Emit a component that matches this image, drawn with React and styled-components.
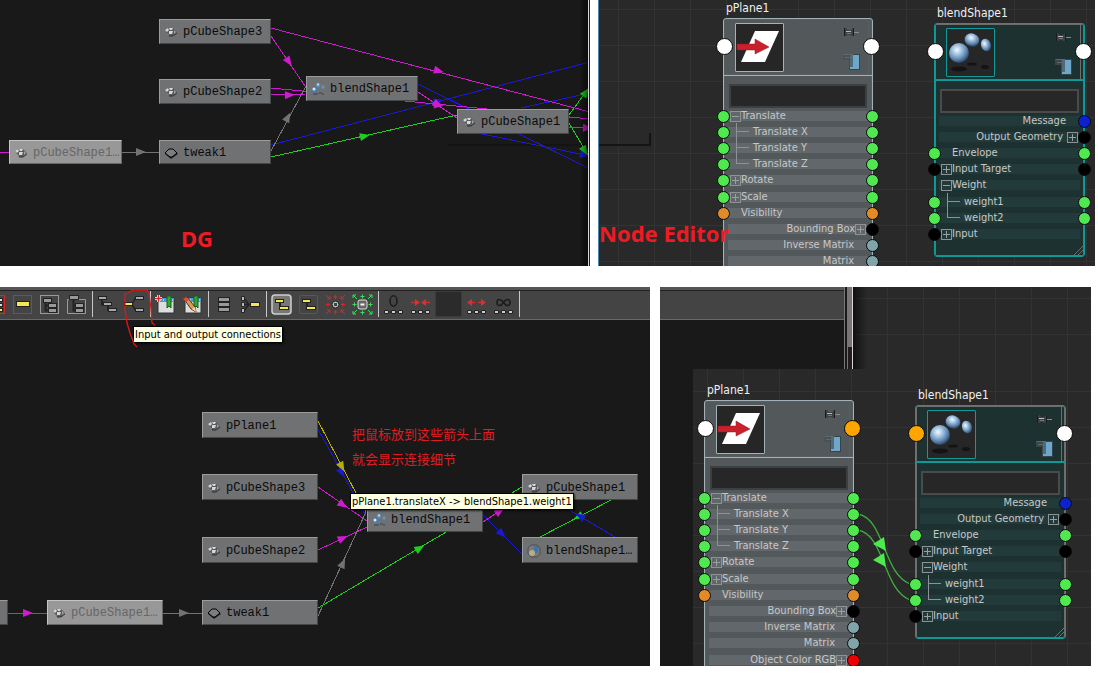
import React from "react";
import styled, { createGlobalStyle, css } from "styled-components";

const GlobalStyle = createGlobalStyle`
  *, *::before, *::after { box-sizing: border-box; }
  body { margin: 0; background: #fff; }
  button, input { font: inherit; color: inherit; margin: 0; padding: 0; }
`;

const UI_FONT = `"DejaVu Sans Condensed", "Noto Sans", sans-serif`;

/* ---------- page ---------- */

const Page = styled.main`
  display: flex;
  flex-direction: column;
  gap: 21px;
  font-family: ${UI_FONT};
  overflow: hidden;
`;

const TopRow = styled.section`
  display: grid;
  grid-template-columns: 590fr 497fr;
  gap: 8px;
  padding-right: 3px;
  height: 266px;
`;

const BottomRow = styled.section`
  display: grid;
  grid-template-columns: 650fr 431fr;
  gap: 10px;
  padding-right: 7px;
  height: 379px;
`;

const gridLines = css`
  background-color: #292929;
  background-image: linear-gradient(90deg, #333 1px, transparent 1px),
    linear-gradient(#333 1px, transparent 1px);
  background-size: 36px 36px;
`;

const GraphCanvas = styled.div`
  position: relative;
  flex: 1;
  min-width: 0;
  overflow: hidden;
  background: #191919;
`;

const DgPanel = styled.div`
  display: flex;
  min-width: 0;
`;

const WindowEdge = styled.div`
  position: relative;
  width: 2px;
  background: linear-gradient(90deg, #d8d8d8 1px, #222 1px);
  &::before {
    content: "";
    position: absolute;
    top: 0;
    right: 2px;
    width: 9px;
    height: 100%;
    background: linear-gradient(90deg, transparent, #0008);
  }
`;

const EditorCanvas = styled.div`
  position: relative;
  flex: 1;
  min-width: 0;
  overflow: hidden;
  ${gridLines}
  background-position: ${(p) => p.$origin};
  border-left: ${(p) => (p.$framed ? "1px solid #4f86b0" : "none")};
`;

const DropShadow = styled.div`
  position: absolute;
  left: ${(p) => p.$x}px;
  top: 133px;
  width: ${(p) => p.$w}px;
  height: 13px;
  border-bottom: 2px solid #141414;
  border-right: ${(p) => (p.$corner ? "2px solid #141414" : "none")};
`;

const Layer = styled.svg`
  position: absolute;
  left: 0;
  top: 0;
  width: 100%;
  height: 100%;
  overflow: visible;
  pointer-events: none;
`;

const Caption = styled.strong`
  position: absolute;
  left: ${(p) => p.$x}px;
  top: ${(p) => p.$y}px;
  font: 700 22px/30px "Noto Sans", sans-serif;
  color: #ed1c24;
  white-space: nowrap;
`;

const Note = styled.p`
  position: absolute;
  left: 352px;
  top: 101px;
  margin: 0;
  font: 13px/25px "Noto Sans CJK SC", sans-serif;
  color: #e01c22;
  white-space: nowrap;
`;

const Tooltip = styled.div`
  position: absolute;
  left: ${(p) => p.$x}px;
  top: ${(p) => p.$y}px;
  height: 17px;
  padding: 0 1px;
  border: 1px solid #000;
  background: #ffffe1;
  color: #000;
  font-size: 11px;
  line-height: 15px;
  white-space: nowrap;
  box-shadow: 1px 1px 2px #000a;
`;

/* ---------- dependency graph ---------- */

const NodeBox = styled.div`
  position: absolute;
  left: ${(p) => p.$x}px;
  top: ${(p) => p.$y}px;
  width: ${(p) => p.$w}px;
  height: ${(p) => p.$h}px;
  display: flex;
  align-items: center;
  gap: 4px;
  padding: 1px 0 0 4px;
  overflow: hidden;
  border: 1px solid;
  border-color: ${(p) => (p.$pale ? "#c4c4c4 #666 #666 #c4c4c4" : "#9a9c9d #43474a #43474a #9a9c9d")};
  background: ${(p) => (p.$pale ? "#989898" : "#6f7173")};
  color: ${(p) => (p.$pale ? "#666" : "#0a0a0a")};
  font: 12px/16px "Liberation Mono", monospace;
  white-space: nowrap;
  svg { flex: none; }
`;

const MeshIcon = () => (
  <svg width="15" height="14" viewBox="0 0 15 14">
    <path d="M1 5 4 3 9 3 13 7 9 11 5 11Z" fill="#5a5a5a" />
    <path d="M1 5 4 3 5 5 3 7ZM5 3 9 3 8 5 6 5ZM5 6 9 6 8 9 5 9Z" fill="#d6d6d6" />
    <path d="M10 5 12 7 10 9ZM3 8 5 10 4 10Z" fill="#a2a2a2" />
    <path d="M5 11 9 11 13 8" stroke="#333" fill="none" />
  </svg>
);

const TweakIcon = () => (
  <svg width="15" height="14" viewBox="0 0 15 14">
    <path d="M1 8 7 13 14 8 13 7Z" fill="#222" />
    <path d="M1 7 5 3 9 3 13 7 8 11 6 11Z" fill="#7b7d7e" stroke="#000" />
  </svg>
);

const BlendIcon = () => (
  <svg width="15" height="14" viewBox="0 0 15 14">
    <circle cx="4" cy="8" r="3" fill="#4d7ba6" />
    <circle cx="3" cy="7" r="1.5" fill="#d4e8f8" />
    <circle cx="7" cy="3" r="2.4" fill="#5f8db6" />
    <circle cx="7" cy="2.5" r="1" fill="#d4e8f8" />
    <circle cx="12" cy="5" r="1.7" fill="#6892b8" />
    <path d="M2 12h5M8 11h3M11 12h2" stroke="#3f4346" />
  </svg>
);

const BlendSetIcon = () => (
  <svg width="15" height="14" viewBox="0 0 15 14">
    <path d="M4 1 10 1 13 4 13 10 10 13 4 13 1 10 1 4Z" fill="#77797a" stroke="#4c4e50" />
    <rect x="7" y="2" width="4" height="7" rx="1" fill="#3f74aa" />
    <circle cx="5" cy="9" r="3" fill="#b9ad86" />
  </svg>
);

const ICONS = { mesh: MeshIcon, tweak: TweakIcon, blend: BlendIcon, set: BlendSetIcon };

function GraphNode({ x, y, w, h = 25, icon = "mesh", pale, children }) {
  const Icon = ICONS[icon];
  return (
    <NodeBox $x={x} $y={y} $w={w} $h={h} $pale={pale}>
      {Icon && <Icon />}
      {children}
    </NodeBox>
  );
}

const COLORS = {
  magenta: "#cf1bcf",
  blue: "#1a1ad2",
  green: "#1fcf1f",
  grey: "#737373",
  yellow: "#b5b000",
};

function Edge({ d: [x1, y1, x2, y2], at, c }) {
  const color = COLORS[c];
  const angle = (Math.atan2(y2 - y1, x2 - x1) * 180) / Math.PI;
  return (
    <g>
      <line x1={x1} y1={y1} x2={x2} y2={y2} stroke={color} shapeRendering="crispEdges" />
      {at && (
        <polygon
          points="-5,-4 5,0 -5,4"
          fill={color}
          transform={`translate(${at[0]} ${at[1]}) rotate(${angle})`}
        />
      )}
    </g>
  );
}

const TOP_EDGES = [
  { c: "blue", d: [271, 145, 590, 62], at: [439, 101] },
  { c: "blue", d: [418, 84, 590, 169] },
  { c: "blue", d: [521, 108, 590, 93] },
  { c: "blue", d: [482, 134, 590, 156], at: [585, 155] },
  { c: "green", d: [271, 157, 457, 115], at: [365, 136] },
  { c: "green", d: [569, 115, 588, 89], at: [586, 92] },
  { c: "green", d: [569, 123, 588, 155], at: [585, 151] },
  { c: "magenta", d: [271, 28, 590, 112], at: [439, 71] },
  { c: "magenta", d: [271, 36, 305, 86], at: [289, 62] },
  { c: "magenta", d: [271, 88, 590, 119], at: [439, 105] },
  { c: "magenta", d: [271, 95, 306, 94], at: [290, 95] },
  { c: "magenta", d: [418, 92, 457, 118], at: [438, 105] },
  { c: "magenta", d: [569, 127, 590, 128], at: [588, 128] },
  { c: "grey", d: [271, 151, 306, 86], at: [288, 117] },
  { c: "magenta", d: [0, 152, 9, 152] },
  { c: "grey", d: [122, 152, 159, 152], at: [141, 152] },
];

const BOTTOM_EDGES = [
  { c: "blue", d: [318, 109, 366, 196], at: [342, 153] },
  { c: "yellow", d: [318, 101, 366, 192], at: [342, 147] },
  { c: "magenta", d: [318, 167, 367, 201], at: [343, 185] },
  { c: "magenta", d: [318, 230, 367, 207], at: [343, 218] },
  { c: "grey", d: [318, 296, 366, 192], at: [343, 243] },
  { c: "green", d: [318, 288, 522, 167], at: [420, 228] },
  { c: "blue", d: [483, 195, 522, 234], at: [502, 214] },
  { c: "magenta", d: [483, 202, 522, 176], at: [500, 191] },
  { c: "green", d: [611, 180, 540, 217], at: [578, 197] },
  { c: "blue", d: [615, 217, 569, 190], at: [580, 196] },
  { c: "magenta", d: [7, 293, 47, 293], at: [28, 293] },
  { c: "grey", d: [163, 293, 202, 293], at: [184, 293] },
];

/* ---------- toolbar ---------- */

const Stack = styled.div`
  display: flex;
  flex-direction: column;
  min-width: 0;
  position: relative;
`;

const toolbarFace = css`
  border-bottom: 1px solid #686868;
  background: linear-gradient(#555 3px, #222 3px, #222 4px, #444 4px);
`;

const ToolbarBar = styled.div`
  flex: none;
  height: 33px;
  display: flex;
  align-items: flex-start;
  padding-top: 4px;
  overflow: hidden;
  ${toolbarFace}
`;

const ToolButtons = styled.div`
  display: flex;
  align-items: center;
  height: 26px;
  margin-left: -18px;
`;

const ToolButton = styled.button`
  width: 27px;
  height: 25px;
  flex: none;
  display: flex;
  align-items: center;
  justify-content: center;
  border: 0;
  background: none;
  svg { display: block; }
`;

const Divider = styled.span`
  width: 4px;
  height: 26px;
  flex: none;
  background: linear-gradient(90deg, transparent 2px, #c8c8c8 2px, #c8c8c8 3px, transparent 3px);
`;

const DepthField = styled.input`
  width: 27px;
  height: 26px;
  margin: 0 1px;
  border: 1px solid #3a3a3a;
  border-radius: 2px;
  background: #2b2b2b;
`;

const Bar = ({ x, y, w = 7, h = 4, c = "#a8a8a8" }) => (
  <rect x={x + 0.5} y={y + 0.5} width={w} height={h - 1} fill={c} stroke="#222" />
);

const Y = "#f2e94e";

const Frame = ({ c }) => <rect x="1.5" y="1.5" width="18" height="18" fill="none" stroke={c} />;

const Chain = () => (
  <>
    <path d="M4 18H18" stroke="#222" />
    <path d="M1.500 16.500h4v3h-4zM8.500 16.500h4v3h-4zM15.500 16.500h4v3h-4z" fill="#ccc" stroke="#222" />
  </>
);

const Bookmark = () => (
  <>
    <rect x="3" y="4" width="16" height="15" fill="#ddd" stroke="#333" />
    <rect x="3" y="4" width="16" height="4" fill="#4f9bd0" />
    <path d="M5 6h1M8 6h1M17 6h1" stroke="#fff" />
    <path d="M12 2h4v12l-2-2-2 2Z" fill="#2fa836" stroke="#17601b" />
  </>
);

const Star = ({ c, out }) => (
  <g stroke={c} fill="none">
    {[0, 90, 180, 270].map((a) => (
      <g key={a} transform={`rotate(${a} 10.5 10.5)`}>
        {out ? (
          <path d="M10.500 4.500V0.500M8.500 2.500H12.500M5 5 1 1M1 4V1H4" />
        ) : (
          <path d="M10.500 1V5M8.500 3H12.500M1 1 5 5M5 2V5H2" />
        )}
      </g>
    ))}
  </g>
);

const TOOLS = [
  ["Show selected attributes", <><Frame c="#e02222" /><Bar x={9} y={4} w={8} c="#ddd" /><Bar x={9} y={9} w={8} c="#ddd" /><Bar x={9} y={14} w={8} c={Y} /></>],
  ["Show selected", <><Frame c="#e02222" /><Bar x={4} y={7} w={13} h={6} c={Y} /></>],
  ["Hierarchy", <><Frame c="#999" /><path d="M6.500 7V16.500H10M6.500 11.500H10" stroke="#222" fill="none" strokeWidth="2" /><Bar x={4} y={4} w={8} h={5} c="#999" /><Bar x={9} y={9} w={8} h={5} c="#999" /><Bar x={9} y={14} w={8} h={5} c="#999" /></>],
  ["Parent hierarchy", <><path d="M4 5.500H1.500V19.500H19.500V5.500H13" stroke="#999" fill="none" /><path d="M7.500 5V16.500H10M7.500 11.500H10" stroke="#222" fill="none" strokeWidth="2" /><Bar x={3} y={1} w={9} h={5} c="#999" /><Bar x={9} y={9} w={8} h={5} c="#999" /><Bar x={9} y={14} w={8} h={5} c="#999" /></>],
  null,
  ["Output connections", <><path d="M5 6V10.500H8M11 12V16H13" stroke="#222" fill="none" strokeWidth="2" /><Bar x={1} y={2} w={8} /><Bar x={6} y={8} w={8} /><Bar x={11} y={14} w={8} /></>],
  ["Input and output connections", <><path d="M8 10.500 11 4.500H13M8 10.500 11 15.500H13" stroke="#222" fill="none" strokeWidth="1.500" /><Bar x={0} y={8} c={Y} w={8} /><Bar x={11} y={2} w={8} /><Bar x={11} y={14} w={8} /></>],
  null,
  ["Create bookmark", <><Bookmark /><path d="M3.500 1V8M0 4.500H7" stroke="#fff" strokeWidth="3" /><path d="M3.500 1V8M0 4.500H7" stroke="#e02020" strokeWidth="1.500" /></>],
  ["Edit bookmark", <><Bookmark /><path d="M2 5 5 3 13 13 14 18 9 15Z" fill="#d99a5b" stroke="#553311" /><path d="M1 5 4 3 7 6 4 8Z" fill="#e04848" /><path d="M10 15 14 18 13 13Z" fill="#f3d6a8" /></>],
  null,
  ["List", <><Bar x={5} y={3} w={11} h={5} c="#999" /><Bar x={5} y={8} w={11} h={5} c="#999" /><Bar x={5} y={13} w={11} h={5} c="#999" /></>],
  ["Merge", <><path d="M4 4.500 9 10.500 4 16.500M4 10.500H12" stroke="#222" fill="none" strokeWidth="1.500" /><path d="M1.500 2.500h3v4h-3zM1.500 8.500h3v4h-3zM1.500 14.500h3v4h-3z" fill="#bbb" stroke="#222" /><Bar x={10} y={8} w={9} h={5} c={Y} /></>],
  null,
  ["Free-form layout", <><rect x="1" y="1" width="19" height="19" rx="3" fill="#777" stroke="#d0d0d0" strokeWidth="1.500" /><path d="M9 8V13" stroke="#222" strokeWidth="2" /><Bar x={4} y={5} w={8} h={4} c={Y} /><Bar x={8} y={12} w={9} h={4} c={Y} /></>],
  ["Automatic layout", <><rect x="1.500" y="1.500" width="18" height="18" rx="2" fill="none" stroke="#585858" /><path d="M9 8V13" stroke="#222" strokeWidth="2" /><Bar x={4} y={5} w={8} h={4} c={Y} /><Bar x={8} y={12} w={9} h={4} c={Y} /></>],
  ["Collapse", <><Star c="#e02424" /><circle cx="10.500" cy="10.500" r="3.500" fill="#bbb" stroke="#222" /><rect x="9" y="9" width="3" height="3" fill="#444" /></>],
  ["Expand", <><Star c="#34e254" out /><rect x="6" y="6" width="9" height="9" rx="2" fill="#666" stroke="#ddd" /><path d="M8.500 10.500H12.500" stroke="#fff" strokeWidth="2" /></>],
  null,
  ["Depth zero", <><ellipse cx="10.500" cy="7" rx="3.500" ry="5.200" fill="none" stroke="#1c1c1c" strokeWidth="1.600" /><Chain /></>],
  ["Decrease depth", <><path d="M1 8.500H7M20 8.500H14" stroke="#c83030" strokeWidth="1.500" /><path d="M5 5 10 8.500 5 12ZM16 5 11 8.500 16 12Z" fill="#d03434" /><Chain /></>],
  "field",
  ["Increase depth", <><path d="M4 8.500H9M17 8.500H12" stroke="#c83030" strokeWidth="1.500" /><path d="M6 5 1 8.500 6 12ZM15 5 20 8.500 15 12Z" fill="#d03434" /><Chain /></>],
  ["Unlimited depth", <><path d="M10.500 8.500C8 4.500 4 4.500 4 8.500S8 12.500 10.500 8.500 17 4.500 17 8.500 13 12.500 10.500 8.500Z" fill="none" stroke="#1c1c1c" strokeWidth="1.600" /><Chain /></>],
  null,
];

function Toolbar() {
  return (
    <ToolbarBar role="toolbar">
      <ToolButtons>
        {TOOLS.map((t, i) =>
          t === null ? (
            <Divider key={i} />
          ) : t === "field" ? (
            <DepthField key={i} aria-label="Depth" />
          ) : (
            <ToolButton key={i} type="button" aria-label={t[0]}>
              <svg width="21" height="21" viewBox="0 0 21 21">{t[1]}</svg>
            </ToolButton>
          )
        )}
      </ToolButtons>
    </ToolbarBar>
  );
}

/* ---------- node editor ---------- */

const THEMES = {
  plane: { w: 150, bg: "#53595b", band: "#62676b", line: "#a3b1b9", inner: "#565e62", field: "#3c4042", outGap: 0 },
  blend: { w: 151, bg: "#1d3131", band: "#223a3a", line: "#119a98", inner: "#6d6d6d", field: "#4a4a4a", outGap: 4 },
};

const EditorNodeRoot = styled.article`
  position: absolute;
  left: ${(p) => p.$x}px;
  top: ${(p) => p.$y}px;
  width: ${(p) => p.$t.w}px;
`;

const NodeTitle = styled.h2`
  margin: 0 0 2px 3px;
  font-size: 12px;
  line-height: 16px;
  font-weight: 400;
  color: #f0f0f0;
`;

const NodeBody = styled.div`
  position: relative;
  padding-bottom: 14px;
  background: ${(p) => p.$t.bg};
  border: 1px solid ${(p) => p.$t.line};
  border-radius: 3px;
  box-shadow: inset 0 0 0 1px ${(p) => p.$t.inner};
  color: #c8c8c8;
  font-size: 11px;
`;

const NodeHeader = styled.header`
  position: relative;
  height: 57px;
  display: flex;
  justify-content: space-between;
  padding: 4px 12px 0 11px;
  border-bottom: 1px solid ${(p) => p.$t.line};
  box-shadow: inset 0 -1px ${(p) => p.$t.inner};
  &::after {
    content: "";
    position: absolute;
    right: 3px;
    top: 0;
    width: 1px;
    height: 100%;
    background: ${(p) => p.$t.inner};
  }
`;

const Thumb = styled.div`
  width: 49px;
  height: 49px;
  border: 1px solid ${(p) => p.$t.line};
  border-radius: 1px;
  background: #262626;
  svg { display: block; }
`;

const HeaderIcons = styled.div`
  display: flex;
  flex-direction: column;
  justify-content: space-between;
  padding: 4px 0 5px;
  svg { display: block; }
`;

const NameField = styled.input`
  display: block;
  width: calc(100% - 10px);
  height: 24px;
  margin: 8px 5px 0;
  border: 2px solid ${(p) => p.$t.field};
  background: #272727;
`;

const Groups = styled.div`
  display: flex;
  flex-direction: column;
  gap: 1px;
  margin: 0 4px;
`;

const AttrGroup = styled.ul`
  margin: 0;
  padding: 0;
  list-style: none;
`;

const rowPadding = ({ $out, $box, $child }) => {
  if ($out) return $box ? "0 2px 0 0" : "0 14px 0 0";
  if ($child) return "0 0 0 25px";
  return $box ? "0 0 0 2px" : "0 0 0 13px";
};

const AttrRow = styled.li`
  position: relative;
  height: 16px;
  display: flex;
  align-items: center;
  line-height: 16px;
  white-space: nowrap;
  gap: ${(p) => (p.$out ? p.$t.outGap : 0)}px;
  justify-content: ${(p) => (p.$out ? "flex-end" : "flex-start")};
  padding: ${rowPadding};
  background: linear-gradient(
    transparent 3px,
    ${(p) => p.$t.band} 3px,
    ${(p) => p.$t.band} 13px,
    transparent 13px
  );
`;

const ToggleButton = styled.button`
  width: 11px;
  height: 11px;
  flex: none;
  display: block;
  border: 1px solid #8d9294;
  background: none;
  svg { display: block; }
`;

const Branch = styled.span`
  position: absolute;
  left: 8px;
  top: ${(p) => (p.$first ? "-1px" : "-8px")};
  width: 13px;
  height: ${(p) => (p.$first ? "9px" : "16px")};
  border: solid #8d9294;
  border-width: 0 0 1px 1px;
`;

const Port = styled.span`
  position: absolute;
  z-index: 1;
  ${(p) => p.$side}: ${(p) => (p.$big ? "-8px" : "-11px")};
  top: ${(p) => (p.$big ? "19px" : "2px")};
  width: ${(p) => (p.$big ? 17 : 13)}px;
  height: ${(p) => (p.$big ? 17 : 13)}px;
  border: 1px solid #0a0a0a;
  border-radius: 50%;
  background: ${(p) => p.$c};
`;

const PlaneArt = () => (
  <svg width="47" height="47" viewBox="0 0 47 47">
    <polygon points="19,7 43,7 29,38 5,38" fill="#fff" />
    <path d="M1 20H19V15L33 23 19 30V26H1Z" fill="#c9202b" stroke="#8d1820" strokeWidth=".5" />
  </svg>
);

const SpheresArt = () => (
  <svg width="47" height="47" viewBox="0 0 47 47">
    <defs>
      <radialGradient id="ball" cx=".4" cy=".35" r=".65">
        <stop offset="0" stopColor="#f4faff" />
        <stop offset=".3" stopColor="#b0cde8" />
        <stop offset=".75" stopColor="#5a82ac" />
        <stop offset="1" stopColor="#2c4664" />
      </radialGradient>
    </defs>
    <g fill="#141414">
      <ellipse cx="12" cy="40" rx="8" ry="2.500" />
      <ellipse cx="25" cy="35" rx="5" ry="1.500" />
      <ellipse cx="38" cy="38" rx="4" ry="2" />
    </g>
    <g fill="url(#ball)">
      <circle cx="12" cy="24" r="10" />
      <ellipse cx="25" cy="11" rx="7.500" ry="6.500" transform="rotate(20 25 11)" />
      <ellipse cx="39" cy="16" rx="5" ry="6.500" transform="rotate(-20 39 16)" />
    </g>
  </svg>
);

const PinIcon = () => (
  <svg width="17" height="11" viewBox="0 0 17 11">
    <path d="M1 1H3L5 3H8L10 1V9H8L7 8H5L3 9H1Z" fill="#3f4244" />
    <path d="M1.500 1V9M10.500 1V9" stroke="#1b1b1b" />
    <path d="M3 4.500H8" stroke="#b8b8b8" />
    <path d="M4 6.500H8" stroke="#777" />
    <path d="M11 5.500H16" stroke="#8a8a8a" />
  </svg>
);

const SwatchIcon = () => (
  <svg width="17" height="17" viewBox="0 0 17 17">
    <rect x="6.500" y="1.500" width="10" height="15" fill="#6ea7c9" stroke="#33444c" />
    <path d="M0 1H10V14H6V7H0Z" fill="#445056" fillOpacity=".7" />
    <path d="M0.500 1.500H10M2 4.500H8" stroke="#5f6a6f" fill="none" />
  </svg>
);

function Toggle({ open }) {
  return (
    <ToggleButton type="button" aria-label={open ? "Collapse" : "Expand"}>
      <svg width="9" height="9" viewBox="0 0 9 9" stroke="#9aa0a2">
        <path d={open ? "M1 4.500H8" : "M1 4.500H8M4.500 1V8"} />
      </svg>
    </ToggleButton>
  );
}

const G = "#50e850";
const K = "#000";
const O = "#e08a28";
const T = "#80a5a8";

const PLANE_GROUPS = [
  [
    { name: "Translate", toggle: "open", left: G, right: G },
    { name: "Translate X", child: "first", left: G, right: G },
    { name: "Translate Y", child: "next", left: G, right: G },
    { name: "Translate Z", child: "next", left: G, right: G },
    { name: "Rotate", toggle: "closed", left: G, right: G },
  ],
  [
    { name: "Scale", toggle: "closed", left: G, right: G },
    { name: "Visibility", left: O, right: O },
    { name: "Bounding Box", out: true, toggle: "closed", right: K },
    { name: "Inverse Matrix", out: true, right: T },
    { name: "Matrix", out: true, right: T },
  ],
];

const PLANE_COLOR_GROUPS = [
  ...PLANE_GROUPS,
  [{ name: "Object Color RGB", out: true, toggle: "closed", right: "#ee0000" }],
];

const BLEND_GROUPS = [
  [
    { name: "Message", out: true, right: "#0b22cc" },
    { name: "Output Geometry", out: true, toggle: "closed", right: K },
    { name: "Envelope", left: G, right: G },
    { name: "Input Target", toggle: "closed", left: K, right: K },
    { name: "Weight", toggle: "open" },
  ],
  [
    { name: "weight1", child: "first", left: G, right: G },
    { name: "weight2", child: "next", left: G, right: G },
    { name: "Input", toggle: "closed", left: K },
  ],
];

const ResizeGrip = styled.svg`
  position: absolute;
  right: 1px;
  bottom: 1px;
`;

function EditorNode({ x, y, kind, title, groups, leftPort = "#fff", rightPort = "#fff" }) {
  const t = THEMES[kind];
  return (
    <EditorNodeRoot $x={x} $y={y} $t={t}>
      <NodeTitle>{title}</NodeTitle>
      <NodeBody $t={t}>
        <NodeHeader $t={t}>
          <Port $big $side="left" $c={leftPort} />
          <Thumb $t={t}>{kind === "plane" ? <PlaneArt /> : <SpheresArt />}</Thumb>
          <HeaderIcons>
            <PinIcon />
            <SwatchIcon />
          </HeaderIcons>
          <Port $big $side="right" $c={rightPort} />
        </NodeHeader>
        <NameField $t={t} aria-label={`${title} filter`} />
        <Groups>
          {groups.map((rows, i) => (
            <AttrGroup key={i}>
              {rows.map((r) => (
                <AttrRow key={r.name} $out={r.out} $child={r.child} $box={!!r.toggle} $t={t}>
                  {r.left && <Port $side="left" $c={r.left} />}
                  {r.child && <Branch $first={r.child === "first"} />}
                  {r.toggle && !r.out && <Toggle open={r.toggle === "open"} />}
                  <span>{r.name}</span>
                  {r.toggle && r.out && <Toggle open={false} />}
                  {r.right && <Port $side="right" $c={r.right} />}
                </AttrRow>
              ))}
            </AttrGroup>
          ))}
        </Groups>
        <ResizeGrip width="9" height="9" viewBox="0 0 9 9" stroke="#6d6d6d">
          <path d="M0 9 9 0M4 9 9 4" />
        </ResizeGrip>
      </NodeBody>
    </EditorNodeRoot>
  );
}

/* ---------- overlapping window strip ---------- */

const EditorStack = styled.div`
  display: flex;
  flex-direction: column;
  min-width: 0;
  overflow: hidden;
  background: #191919;
`;

const Strip = styled.div`
  display: flex;
  height: 82px;
  flex: none;
`;

const BackWindow = styled.div`
  width: 184px;
  background: #191919;
  &::before {
    content: "";
    display: block;
    height: 33px;
    ${toolbarFace}
  }
`;

const BackScroll = styled.div`
  width: 9px;
  border-left: 1px solid #777;
  border-right: 1px solid #d8d8d8;
  background: linear-gradient(90deg, #191919 2px, #777 2px, #777 3px, transparent 3px),
    linear-gradient(#7a7575 60px, #241c1c 60px);
`;

const StripGrid = styled.div`
  flex: 1;
  ${gridLines}
  background-image: linear-gradient(90deg, #0009, transparent 14px),
    linear-gradient(90deg, #333 1px, transparent 1px), linear-gradient(#333 1px, transparent 1px);
  background-size: 100% 100%, 36px 36px, 36px 36px;
  background-position: 0 0, 34px 0, 0 11px;
`;

const EditorBody = styled.div`
  flex: 1;
  display: flex;
  padding-left: 33px;
`;

const Wires = () => (
  <Layer>
    <g fill="none" stroke="#3faf3f" strokeWidth="1.300">
      <path d="M165 145C192 150 190 205 217 215" />
      <path d="M165 161C192 166 190 221 217 231" />
    </g>
    <g fill={G}>
      <polygon points="191,168 180,175 193,182" />
      <polygon points="191,184 180,191 193,198" />
    </g>
  </Layer>
);

export default function App() {
  return (
    <>
      <GlobalStyle />
      <Page>
        <TopRow>
          <DgPanel>
            <GraphCanvas>
              <DropShadow $x={447} $w={141} />
              <Layer>
                {TOP_EDGES.map((e, i) => <Edge key={i} {...e} />)}
              </Layer>
              <GraphNode x={159} y={19} w={112}>pCubeShape3</GraphNode>
              <GraphNode x={159} y={79} w={112}>pCubeShape2</GraphNode>
              <GraphNode x={159} y={140} w={112} h={24} icon="tweak">tweak1</GraphNode>
              <GraphNode x={9} y={140} w={113} h={24} pale>pCubeShape1…</GraphNode>
              <GraphNode x={306} y={76} w={112} icon="blend">blendShape1</GraphNode>
              <GraphNode x={457} y={109} w={112}>pCubeShape1</GraphNode>
              <Caption $x={181} $y={223}>DG</Caption>
            </GraphCanvas>
            <WindowEdge />
          </DgPanel>
          <EditorCanvas $framed $origin="19px 9px">
            <DropShadow $x={0} $w={52} $corner />
            <EditorNode x={124} y={0} kind="plane" title="pPlane1" groups={PLANE_GROUPS} />
            <EditorNode x={335} y={5} kind="blend" title="blendShape1" groups={BLEND_GROUPS} />
            <Caption $x={0} $y={218}>Node Editor</Caption>
          </EditorCanvas>
        </TopRow>

        <BottomRow>
          <Stack>
            <Toolbar />
            <GraphCanvas>
              <Layer>
                {BOTTOM_EDGES.map((e, i) => <Edge key={i} {...e} />)}
              </Layer>
              <GraphNode x={202} y={92} w={116} h={26}>pPlane1</GraphNode>
              <GraphNode x={202} y={154} w={116} h={26}>pCubeShape3</GraphNode>
              <GraphNode x={202} y={217} w={116} h={26}>pCubeShape2</GraphNode>
              <GraphNode x={202} y={280} w={116} icon="tweak">tweak1</GraphNode>
              <GraphNode x={47} y={280} w={116} pale>pCubeShape1…</GraphNode>
              <GraphNode x={-108} y={280} w={116} icon="none" />
              <GraphNode x={367} y={187} w={116} icon="blend">blendShape1</GraphNode>
              <GraphNode x={522} y={154} w={116} h={26}>pCubeShape1</GraphNode>
              <GraphNode x={522} y={217} w={116} h={26} icon="set">blendShape1…</GraphNode>
              <Note>
                把鼠标放到这些箭头上面
                <br />
                就会显示连接细节
              </Note>
              <Tooltip $x={350} $y={173}>pPlane1.translateX -&gt; blendShape1.weight1</Tooltip>
            </GraphCanvas>
            <Tooltip $x={133} $y={39}>Input and output connections</Tooltip>
            <Layer>
              <path
                d="M155 38 152 36 151 22 149 6 147 3 133 3 128 6 125 7 125 22 127 36 130 46 134 57 137 60"
                fill="none"
                stroke="#e01818"
                strokeWidth="1.300"
              />
            </Layer>
          </Stack>

          <EditorStack>
            <Strip>
              <BackWindow />
              <BackScroll />
              <StripGrid />
            </Strip>
            <EditorBody>
              <EditorCanvas $origin="14px 22px">
                <EditorNode x={11} y={13} kind="plane" title="pPlane1" groups={PLANE_COLOR_GROUPS} rightPort="#ffa500" />
                <EditorNode x={222} y={18} kind="blend" title="blendShape1" groups={BLEND_GROUPS} leftPort="#ffa500" />
                <Wires />
              </EditorCanvas>
            </EditorBody>
          </EditorStack>
        </BottomRow>
      </Page>
    </>
  );
}
